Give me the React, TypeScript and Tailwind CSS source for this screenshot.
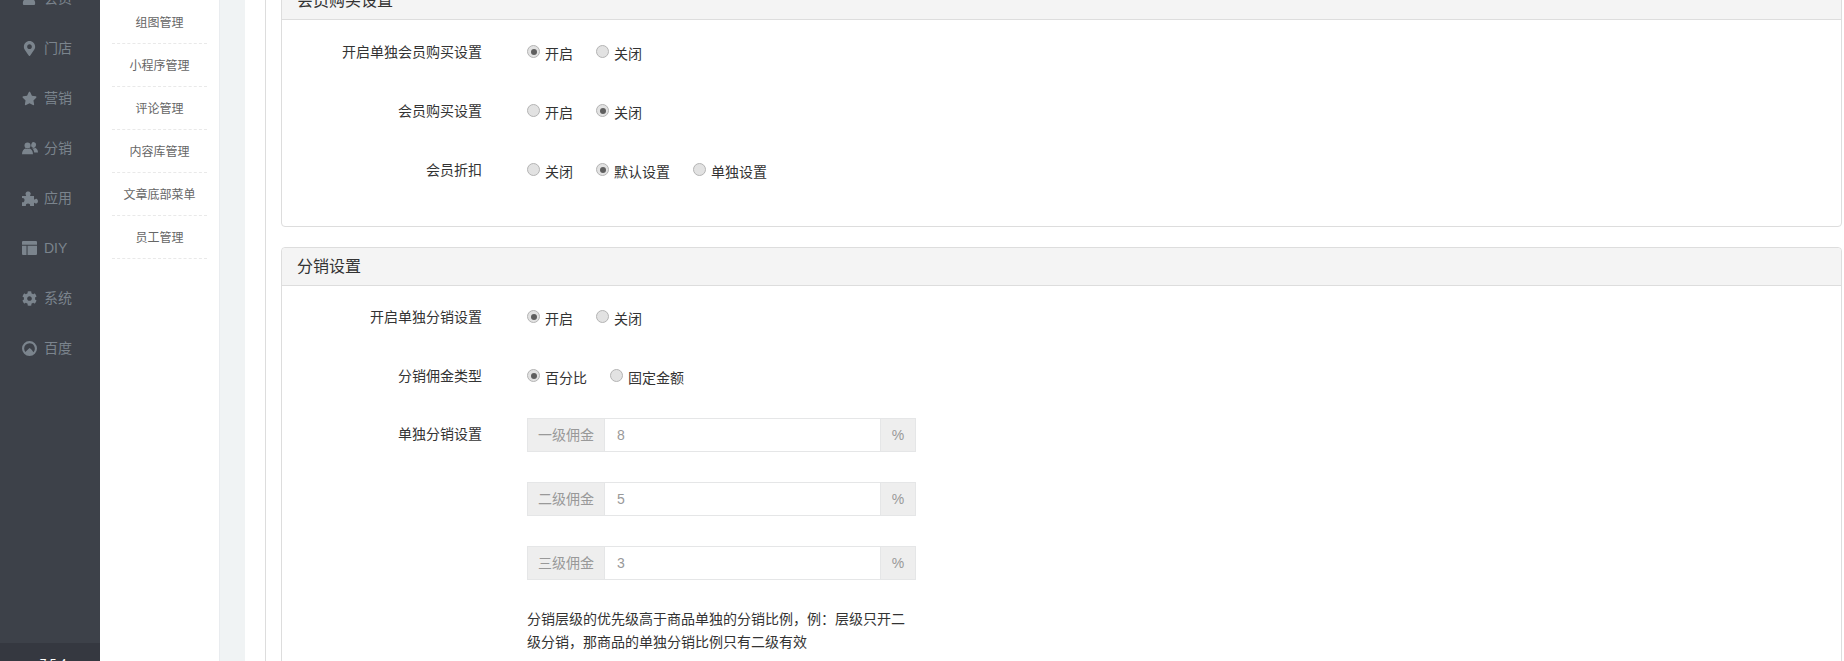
import type { ReactNode } from "react";
import { FaCog, FaMapMarkerAlt, FaStar, FaUser } from "react-icons/fa";

type NavItem = {
  label: string;
  icon: ReactNode;
};

const LayoutIcon = () => (
  <svg width="15" height="14" viewBox="0 0 14 13" fill="currentColor">
    <path d="M1 0h12a1 1 0 0 1 1 1v2.5H0V1a1 1 0 0 1 1-1z" />
    <path d="M0 4.5h4.2V13H1a1 1 0 0 1-1-1z" />
    <path d="M5.2 4.5H14V12a1 1 0 0 1-1 1H5.2z" />
  </svg>
);

const BaiduIcon = () => (
  <svg width="15" height="15" viewBox="0 0 14 14" fill="currentColor">
    <path
      fillRule="evenodd"
      d="M7 0a7 7 0 1 1 0 14A7 7 0 0 1 7 0zm0 2a5 5 0 0 0-5 5c0 1.2.4 2.3 1.1 3.2L7 6.5c1.4 1 2.8 2.3 3.6 3.9A5 5 0 0 0 7 2z"
    />
  </svg>
);

const UsersIcon = () => (
  <svg width="16" height="13" viewBox="0 0 16 13" fill="currentColor">
    <circle cx="5.5" cy="3.6" r="3" />
    <path d="M0 12.2C0 9 1.8 6.8 3.6 6.4c1.2.8 2.6.8 3.8 0 1.8.4 3.6 2.6 3.6 5.8z" />
    <ellipse cx="11.6" cy="3" rx="2.4" ry="2.9" transform="rotate(12 11.6 3)" />
    <path d="M10.2 6c1.2.6 2.2.5 3-.2 1.5.6 2.8 2.4 2.8 4.8h-3.8c-.2-1.8-1-3.4-2-4.6z" />
  </svg>
);

const PuzzleIcon = () => (
  <svg width="16" height="15" viewBox="0 0 16 15" fill="currentColor">
    <path d="M0 5h3.6c.5 0 .7-.4.4-.8C3.4 3.400 3.300 2.700 3.700 2 4.200 1 5.200.6 6.100.6c1 0 1.900.4 2.400 1.400.4.7.2 1.400-.3 2.200-.3.4-.1.8.4.8H12v3c0 .5.4.7.8.4.8-.6 1.500-.7 2.100-.3.7.5 1.100 1.200 1.100 2.100s-.4 1.600-1.100 2.100c-.6.4-1.300.3-2.100-.3-.4-.3-.8-.1-.8.4V15H8c.3-.8.2-1.600-.4-2.100-.9-.7-2.300-.7-3.200 0-.6.5-.7 1.300-.4 2.100H0v-3.800c.8.300 1.500.2 2-.4.7-.9.700-2.300 0-3.200-.5-.6-1.200-.7-2-.4z" />
  </svg>
);

const navItems: NavItem[] = [
  { label: "会员", icon: <FaUser size={14} /> },
  { label: "门店", icon: <FaMapMarkerAlt size={15} /> },
  { label: "营销", icon: <FaStar size={15} /> },
  { label: "分销", icon: <UsersIcon /> },
  { label: "应用", icon: <PuzzleIcon /> },
  { label: "DIY", icon: <LayoutIcon /> },
  { label: "系统", icon: <FaCog size={15} /> },
  { label: "百度", icon: <BaiduIcon /> },
];

const subItems = ["组图管理", "小程序管理", "评论管理", "内容库管理", "文章底部菜单", "员工管理"];

const Radio = ({ label, checked }: { label: string; checked?: boolean }) => (
  <label className="flex items-start mr-[23px]">
    <span className="flex items-center justify-center w-[13px] h-[13px] mt-[3px] mr-[5px] rounded-full border border-[#b4b4b4] bg-[#e2e2e2]">
      {checked && <span className="w-[6px] h-[6px] rounded-full bg-[#5f5f5f]" />}
    </span>
    <span className="mt-[2px]">{label}</span>
  </label>
);

const RadioRow = ({
  label,
  options,
  checked,
  height = "h-[59px]",
}: {
  label: string;
  options: string[];
  checked: number;
  height?: string;
}) => (
  <div className={`flex ${height}`}>
    <div className="w-[200px] text-right text-[#333]">{label}</div>
    <div className="flex ml-[45px] h-[20px] text-[#333]">
      {options.map((option, i) => (
        <Radio key={option} label={option} checked={i === checked} />
      ))}
    </div>
  </div>
);

const CommissionInput = ({ prefix, value }: { prefix: string; value: string }) => (
  <div className="flex w-[389px] h-[34px] border border-[#e5e6e7] text-[#999] mb-[30px]">
    <div className="flex items-center justify-center w-[77px] bg-[#eee] border-r border-[#e5e6e7]">{prefix}</div>
    <div className="flex items-center flex-1 pl-[12px] bg-white">{value}</div>
    <div className="flex items-center justify-center w-[35px] bg-[#eee] border-l border-[#e5e6e7]">%</div>
  </div>
);

const Panel = ({ title, children, className }: { title: string; children: ReactNode; className?: string }) => (
  <div className={`border border-[#ddd] rounded-[4px] ${className ?? ""}`}>
    <div className="h-[38px] flex items-center px-[15px] pt-[1px] bg-[#f4f4f4] border-b border-[#ddd] text-[16px] text-[#333] rounded-t-[4px]">
      {title}
    </div>
    {children}
  </div>
);

export default function App() {
  return (
    <div className="flex h-[661px] overflow-hidden bg-white text-[14px] leading-[20px] font-['Liberation_Sans','Noto_Sans_CJK_SC',sans-serif]">
      <aside className="flex flex-col w-[100px] shrink-0 bg-[#3d4149] text-[#7b848d]">
        <div className="flex-1 -mt-[27px]">
          {navItems.map((item) => (
            <div key={item.label} className="flex items-center h-[50px] pl-[22px]">
              <span className="flex items-center w-[22px]">{item.icon}</span>
              <span>{item.label}</span>
            </div>
          ))}
        </div>
        <div className="h-[18px] bg-[#353840] text-white text-[12px] text-center pt-[11px] pl-[6px]">7.5.4</div>
      </aside>

      <nav className="w-[120px] shrink-0 bg-white border-r border-[#e9ecef] pt-[1px] px-[12px] text-[12px] text-[#666]">
        {subItems.map((item) => (
          <div key={item} className="flex items-center justify-center h-[43px] w-[95px] pt-[1px] border-b border-dashed border-[#e9e9e9]">
            {item}
          </div>
        ))}
      </nav>

      <div className="w-[25px] shrink-0 bg-[#f0f3f4]" />

      <main className="flex-1 min-w-0 pl-[20px] pr-[2px]">
        <div className="h-[calc(100%+19px)] pl-[15px] border-l border-[#ddd] -mt-[19px]">
          <Panel title="会员购买设置" className="h-[246px]">
            <div className="pt-[22px]">
              <RadioRow label="开启单独会员购买设置" options={["开启", "关闭"]} checked={0} />
              <RadioRow label="会员购买设置" options={["开启", "关闭"]} checked={1} />
              <RadioRow label="会员折扣" options={["关闭", "默认设置", "单独设置"]} checked={1} />
            </div>
          </Panel>

          <Panel title="分销设置" className="mt-[20px]">
            <div className="pt-[21px] pb-[40px]">
              <RadioRow label="开启单独分销设置" options={["开启", "关闭"]} checked={0} />
              <RadioRow label="分销佣金类型" options={["百分比", "固定金额"]} checked={0} height="h-[52px]" />
              <div className="flex">
                <div className="w-[200px] text-right text-[#333] pt-[6px]">单独分销设置</div>
                <div className="ml-[45px] w-[389px]">
                  <CommissionInput prefix="一级佣金" value="8" />
                  <CommissionInput prefix="二级佣金" value="5" />
                  <CommissionInput prefix="三级佣金" value="3" />
                  <p className="text-[#333] leading-[23px] -mt-[2px]">
                    分销层级的优先级高于商品单独的分销比例，例：层级只开二级分销，那商品的单独分销比例只有二级有效
                  </p>
                </div>
              </div>
            </div>
          </Panel>
        </div>
      </main>
    </div>
  );
}
